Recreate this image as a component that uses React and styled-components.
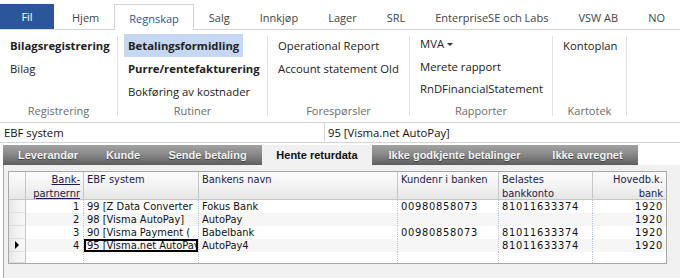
import React from 'react';
import styled, { createGlobalStyle, css } from 'styled-components';

const GlobalStyle = createGlobalStyle`
    html, body {
        margin : 0;
        padding : 0;
        background : #ffffff;
    }
    body {
        font-family : 'Open Sans', 'Noto Sans', sans-serif;
        color : #222;
    }
`

const topTabs = ['Hjem', 'Regnskap', 'Salg', 'Innkjøp', 'Lager', 'SRL', 'EnterpriseSE och Labs', 'VSW AB', 'NO'];

const groups = [
    { label : 'Registrering', width : 117, items : [{ t : 'Bilagsregistrering', bold : true }, { t : 'Bilag' }] },
    { label : 'Rutiner', width : 149, items : [{ t : 'Betalingsformidling', bold : true, hot : true }, { t : 'Purre/rentefakturering', bold : true }, { t : 'Bokføring av kostnader' }] },
    { label : 'Forespørsler', width : 141, items : [{ t : 'Operational Report' }, { t : 'Account statement Old' }] },
    { label : 'Rapporter', width : 142, compact : true, items : [{ t : 'MVA', menu : true }, { t : 'Merete rapport' }, { t : 'RnDFinancialStatement' }] },
    { label : 'Kartotek', width : 73, items : [{ t : 'Kontoplan' }] },
];

const stripTabs = [
    { t : 'Leverandør', w : 90 },
    { t : 'Kunde', w : 60 },
    { t : 'Sende betaling', w : 109 },
    { t : 'Hente returdata', w : 110, active : true },
    { t : 'Ikke godkjente betalinger', w : 165 },
    { t : 'Ikke avregnet', w : 101 },
];

const rows = [
    { nr : '1', ebf : '99 [Z Data Converter', bank : 'Fokus Bank', kunde : '00980858073', konto : '81011633374', hb : '1920' },
    { nr : '2', ebf : '98 [Visma AutoPay]', bank : 'AutoPay', kunde : '', konto : '', hb : '1920' },
    { nr : '3', ebf : '90 [Visma Payment (', bank : 'Babelbank', kunde : '00980858073', konto : '81011633374', hb : '1920' },
    { nr : '4', ebf : '95 [Visma.net AutoPay]', bank : 'AutoPay4', kunde : '', konto : '81011633374', hb : '1920', current : true },
];

const App = () => {
    return (
    <Page>
        <GlobalStyle />
        <TopTabs>
            <FileTab>Fil</FileTab>
            {topTabs.map((t) => (
                <TopTab key={t} $active={t === 'Regnskap'}>{t}</TopTab>
            ))}
        </TopTabs>
        <Ribbon>
            {groups.map((g) => (
                <React.Fragment key={g.label}>
                    <Group $w={g.width}>
                        <Items>
                            {g.items.map((i) => (
                                <Item key={i.t} $bold={i.bold} $hot={i.hot} $compact={g.compact}>
                                    {i.t}{i.menu && <Caret />}
                                </Item>
                            ))}
                        </Items>
                        <GroupLabel>{g.label}</GroupLabel>
                    </Group>
                    <Separator />
                </React.Fragment>
            ))}
        </Ribbon>
        <FieldRow>
            <Field $w={324}>EBF system</Field>
            <Field $divider>95 [Visma.net AutoPay]</Field>
        </FieldRow>
        <TabStrip>
            {stripTabs.map((s) => (
                <StripTab key={s.t} $w={s.w} $active={s.active}>{s.t}</StripTab>
            ))}
        </TabStrip>
        <Panel>
            <Grid>
                <HeadCell $indicator />
                <HeadCell $right><SortLink>Bank-<br />partnernr</SortLink></HeadCell>
                <HeadCell>EBF system</HeadCell>
                <HeadCell>Bankens navn</HeadCell>
                <HeadCell>Kundenr i banken</HeadCell>
                <HeadCell>Belastes<br />bankkonto</HeadCell>
                <HeadCell $right $last>Hovedb.k.<br />bank</HeadCell>
                {rows.map((r, idx) => {
                    const alt = idx % 2 === 1;
                    return (
                    <React.Fragment key={r.nr}>
                        <IndicatorCell>{r.current && <RowArrow />}</IndicatorCell>
                        <Cell $alt={alt} $right $num>{r.nr}</Cell>
                        <Cell $alt={alt} $focus={r.current}>{r.ebf}</Cell>
                        <Cell $alt={alt}>{r.bank}</Cell>
                        <Cell $alt={alt} $num>{r.kunde}</Cell>
                        <Cell $alt={alt} $num>{r.konto}</Cell>
                        <Cell $alt={alt} $right $num $last>{r.hb}</Cell>
                    </React.Fragment>
                    );
                })}
                <IndicatorCell $short />
                <Cell $short />
                <Cell $short />
                <Cell $short />
                <Cell $short />
                <Cell $short />
                <Cell $short $last />
            </Grid>
        </Panel>
    </Page>
    )
}

const Page = styled.div`
    width : 680px;
    height : 278px;
    overflow : hidden;
    background : #ffffff;
`

const TopTabs = styled.div`
    display : flex;
    align-items : flex-end;
    height : 29px;
    border-bottom : 1px solid #d5d5d5;
    font-size : 11px;
`

const FileTab = styled.div`
    width : 54px;
    height : 25px;
    margin-right : 3px;
    background : #2b579a;
    color : #ffffff;
    display : flex;
    align-items : center;
    justify-content : center;
`

const TopTab = styled.div`
    height : 25px;
    padding : 0 15px;
    display : flex;
    align-items : center;
    padding-top : 2px;
    box-sizing : border-box;
    color : #444444;
    white-space : nowrap;
    ${(p) => p.$active && css`
        height : 26px;
        margin-bottom : -1px;
        padding : 2px 14px 0;
        border : 1px solid #d5d5d5;
        border-bottom : none;
        background : #ffffff;
        color : #2b579a;
    `}
`

const Ribbon = styled.div`
    display : flex;
    height : 92px;
    border-bottom : 1px solid #d5d5d5;
    font-size : 11.3px;
`

const Group = styled.div`
    width : ${(p) => p.$w}px;
    display : flex;
    flex-direction : column;
    padding-top : 4px;
    box-sizing : border-box;
`

const Items = styled.div`
    flex : 1;
    display : flex;
    flex-direction : column;
    align-items : flex-start;
    padding-left : 6px;
`

const Item = styled.div`
    height : ${(p) => p.$compact ? '22.5px' : '23px'};
    line-height : ${(p) => p.$compact ? '22px' : '23px'};
    padding : 0 4px;
    margin-top : ${(p) => p.$compact ? '-1px' : '0'};
    margin-bottom : ${(p) => p.$compact ? '1px' : '0'};
    white-space : nowrap;
    color : #222222;
    font-weight : ${(p) => p.$bold ? 700 : 400};
    background : ${(p) => p.$hot ? '#c5d7f2' : 'transparent'};
    display : flex;
    align-items : center;
`

const Caret = styled.span`
    display : inline-block;
    margin-left : 3px;
    border-left : 3px solid transparent;
    border-right : 3px solid transparent;
    border-top : 3px solid #333333;
`

const GroupLabel = styled.div`
    height : 16px;
    line-height : 16px;
    margin-bottom : 3px;
    text-align : center;
    color : #6d6d6d;
    font-size : 11px;
`

const Separator = styled.div`
    width : 1px;
    margin : 6px 0;
    background : #e1e1e1;
`

const FieldRow = styled.div`
    display : flex;
    height : 19px;
    border-bottom : 1px solid #d5d5d5;
    font-size : 11.3px;
    line-height : 19px;
    color : #111111;
`

const Field = styled.div`
    width : ${(p) => p.$w ? `${p.$w}px` : 'auto'};
    flex : ${(p) => p.$w ? 'none' : 1};
    padding-left : ${(p) => p.$divider ? '3px' : '4px'};
    box-sizing : border-box;
    border-left : ${(p) => p.$divider ? '1px solid #d5d5d5' : 'none'};
`

const TabStrip = styled.div`
    display : flex;
    margin : 2px 0 0 3px;
    height : 20px;
`

const StripTab = styled.div`
    width : ${(p) => p.$w}px;
    display : flex;
    align-items : center;
    justify-content : center;
    font-family : 'Liberation Sans', Arial, sans-serif;
    font-size : 11px;
    font-weight : 700;
    white-space : nowrap;
    ${(p) => p.$active ? css`
        background : #f0f0f0;
        color : #111111;
    ` : css`
        background : linear-gradient(to bottom, #a2a2a2 0%, #8a8a8a 45%, #6e6e6e 80%, #5c5c5c 100%);
        color : #f4f4f4;
        text-shadow : 0 1px 1px #3c3c3c;
    `}
`

const Panel = styled.div`
    margin-left : 3px;
    height : 113px;
    border-left : 1px solid #a9a9a9;
    background : #f0f0f0;
    padding : 6px 0 0 4px;
    box-sizing : border-box;
`

const Grid = styled.div`
    width : 657px;
    display : grid;
    grid-template-columns : 17px 58px 115px 199px 101px 94px 73px;
    border : 1px solid #a8a8a8;
    background : #ffffff;
    font-family : 'DejaVu Sans Condensed', 'DejaVu Sans', sans-serif;
    font-stretch : condensed;
    font-size : 11px;
`

const HeadCell = styled.div`
    height : 28px;
    padding : 1px 3px 0;
    line-height : 14px;
    box-sizing : border-box;
    text-align : ${(p) => p.$right ? 'right' : 'left'};
    color : #1c1c50;
    background : linear-gradient(to bottom, #fbfbfb 0%, #f1f1f1 60%, #e6e6e6 100%);
    border-right : ${(p) => p.$last ? 'none' : '1px solid #c6c6c6'};
    border-bottom : 1px solid #c6c6c6;
    white-space : nowrap;
    overflow : hidden;
`

const SortLink = styled.span`
    text-decoration : underline;
`

const IndicatorCell = styled.div`
    height : ${(p) => p.$short ? '11px' : '13px'};
    box-sizing : border-box;
    background : linear-gradient(to right, #e6e6e6 0%, #f4f4f4 55%, #f7f7f7 100%);
    border-right : 1px solid #c6c6c6;
    border-bottom : 1px solid #dedede;
    display : flex;
    align-items : center;
    justify-content : center;
`

const RowArrow = styled.span`
    display : block;
    margin-left : -1px;
    border-left : 4px solid #000000;
    border-top : 4px solid transparent;
    border-bottom : 4px solid transparent;
`

const Cell = styled.div`
    height : ${(p) => p.$short ? '11px' : '13px'};
    line-height : 13px;
    padding : 0 ${(p) => p.$right ? '3px' : '2px'} 0 3px;
    box-sizing : border-box;
    text-align : ${(p) => p.$right ? 'right' : 'left'};
    letter-spacing : ${(p) => p.$num ? '0.7px' : '0'};
    background : ${(p) => p.$alt ? '#f6f6f6' : '#ffffff'};
    border-right : ${(p) => p.$last ? 'none' : '1px dotted #b9c6e0'};
    color : #111111;
    white-space : nowrap;
    overflow : hidden;
    ${(p) => p.$focus && css`
        box-shadow : inset 0 0 0 2px #000000;
        padding-left : 3px;
    `}
`

export default App;
